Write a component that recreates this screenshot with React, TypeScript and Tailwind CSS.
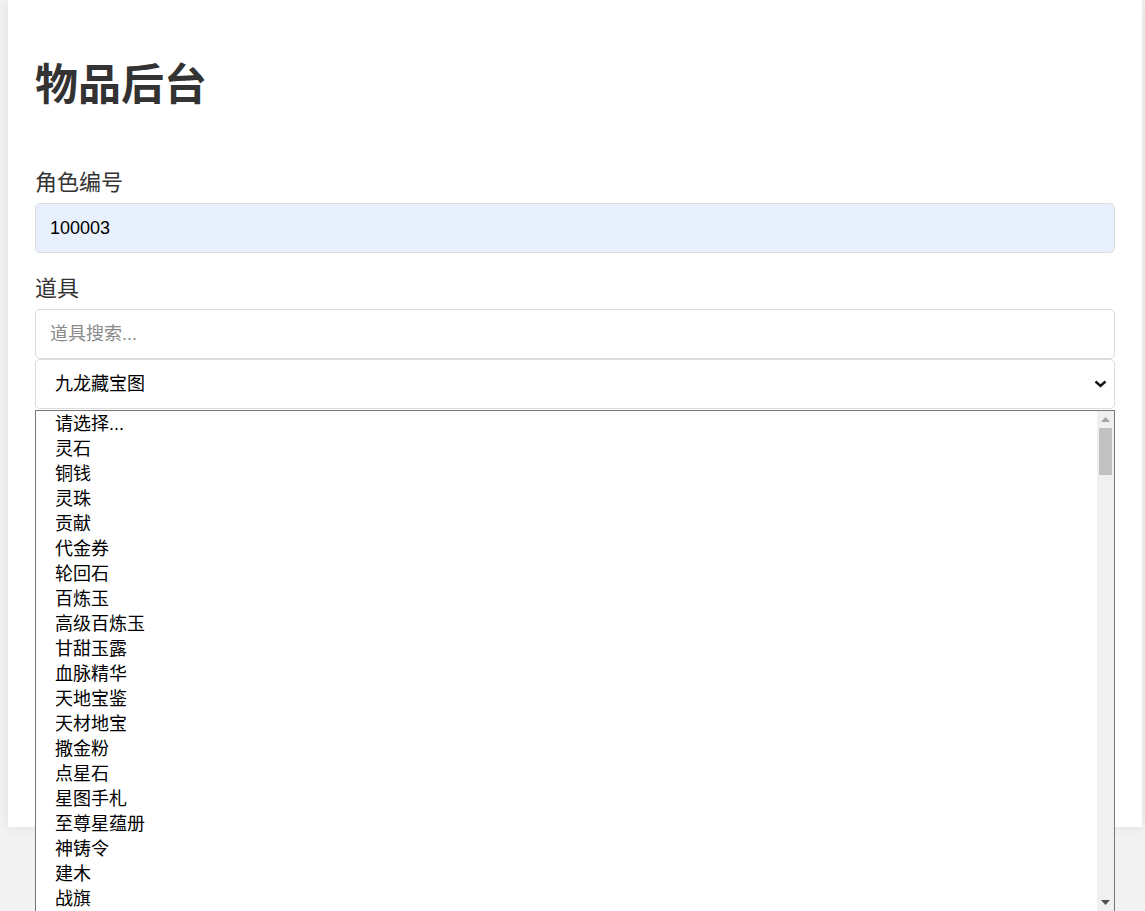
import { useState } from 'react'

const items = [
  '请选择...',
  '灵石',
  '铜钱',
  '灵珠',
  '贡献',
  '代金券',
  '轮回石',
  '百炼玉',
  '高级百炼玉',
  '甘甜玉露',
  '血脉精华',
  '天地宝鉴',
  '天材地宝',
  '撒金粉',
  '点星石',
  '星图手札',
  '至尊星蕴册',
  '神铸令',
  '建木',
  '战旗',
]

const font = { fontFamily: '"Liberation Sans", "Noto Sans CJK SC", sans-serif' }

export default function App() {
  const [roleId, setRoleId] = useState('100003')
  const [query, setQuery] = useState('')

  return (
    <div className="h-screen overflow-hidden bg-[#f2f2f2]" style={font}>
      {/* card */}
      <div className="ml-[8px] w-[1134px] min-h-[827px] bg-white px-[27px] pt-[59px] shadow-[0_0_12px_rgba(0,0,0,0.08)]">
        <h1 className="text-[43px] leading-[52px] font-bold text-[#333]">物品后台</h1>

        <label className="mt-[59px] block text-[22px] leading-[26px] text-[#333]">角色编号</label>
        <input
          value={roleId}
          onChange={(e) => setRoleId(e.target.value)}
          className="mt-[7px] block h-[50px] w-full rounded-[5px] border border-[#dcdcdc] bg-[#e8f0fe] px-[14px] text-[18px] text-black outline-none"
        />

        <label className="mt-[23px] block text-[22px] leading-[26px] text-[#333]">道具</label>
        <input
          value={query}
          onChange={(e) => setQuery(e.target.value)}
          placeholder="道具搜索..."
          className="mt-[7px] block h-[50px] w-full rounded-[5px] border border-[#dcdcdc] bg-white px-[14px] text-[18px] text-black outline-none placeholder:text-[#8a8a8a]"
        />

        <div className="relative">
          <div className="flex h-[50px] w-full items-center justify-between rounded-[5px] border border-[#dcdcdc] bg-white pl-[19px] pr-[6px] text-[18px] text-black">
            <span>九龙藏宝图</span>
            <svg width="13" height="8" viewBox="0 0 13 8" className="mr-[1px]">
              <path d="M1.5 1.5 L6.5 6 L11.5 1.5" fill="none" stroke="#111" strokeWidth="2.4" />
            </svg>
          </div>

          {/* open option list */}
          <div className="absolute left-0 right-0 top-[51px] z-10 flex h-[502px] border border-[#767676] bg-white">
            <ul className="flex-1 pt-[1px]">
              {items.map((item) => (
                <li key={item} className="h-[25px] pl-[19px] text-[18px] leading-[25px] text-black">
                  {item}
                </li>
              ))}
            </ul>
            <div className="relative flex w-[17px] flex-col items-center bg-[#f0f0f0]">
              <svg width="9" height="5" viewBox="0 0 9 5" className="mt-[6px]">
                <path d="M0 5 L4.5 0 L9 5 Z" fill="#a3a3a3" />
              </svg>
              <div className="mt-[6px] h-[47px] w-[13px] bg-[#c1c1c1]" />
              <svg width="9" height="5" viewBox="0 0 9 5" className="absolute bottom-[6px]">
                <path d="M0 0 L9 0 L4.5 5 Z" fill="#505050" />
              </svg>
            </div>
          </div>
        </div>
      </div>
    </div>
  )
}
